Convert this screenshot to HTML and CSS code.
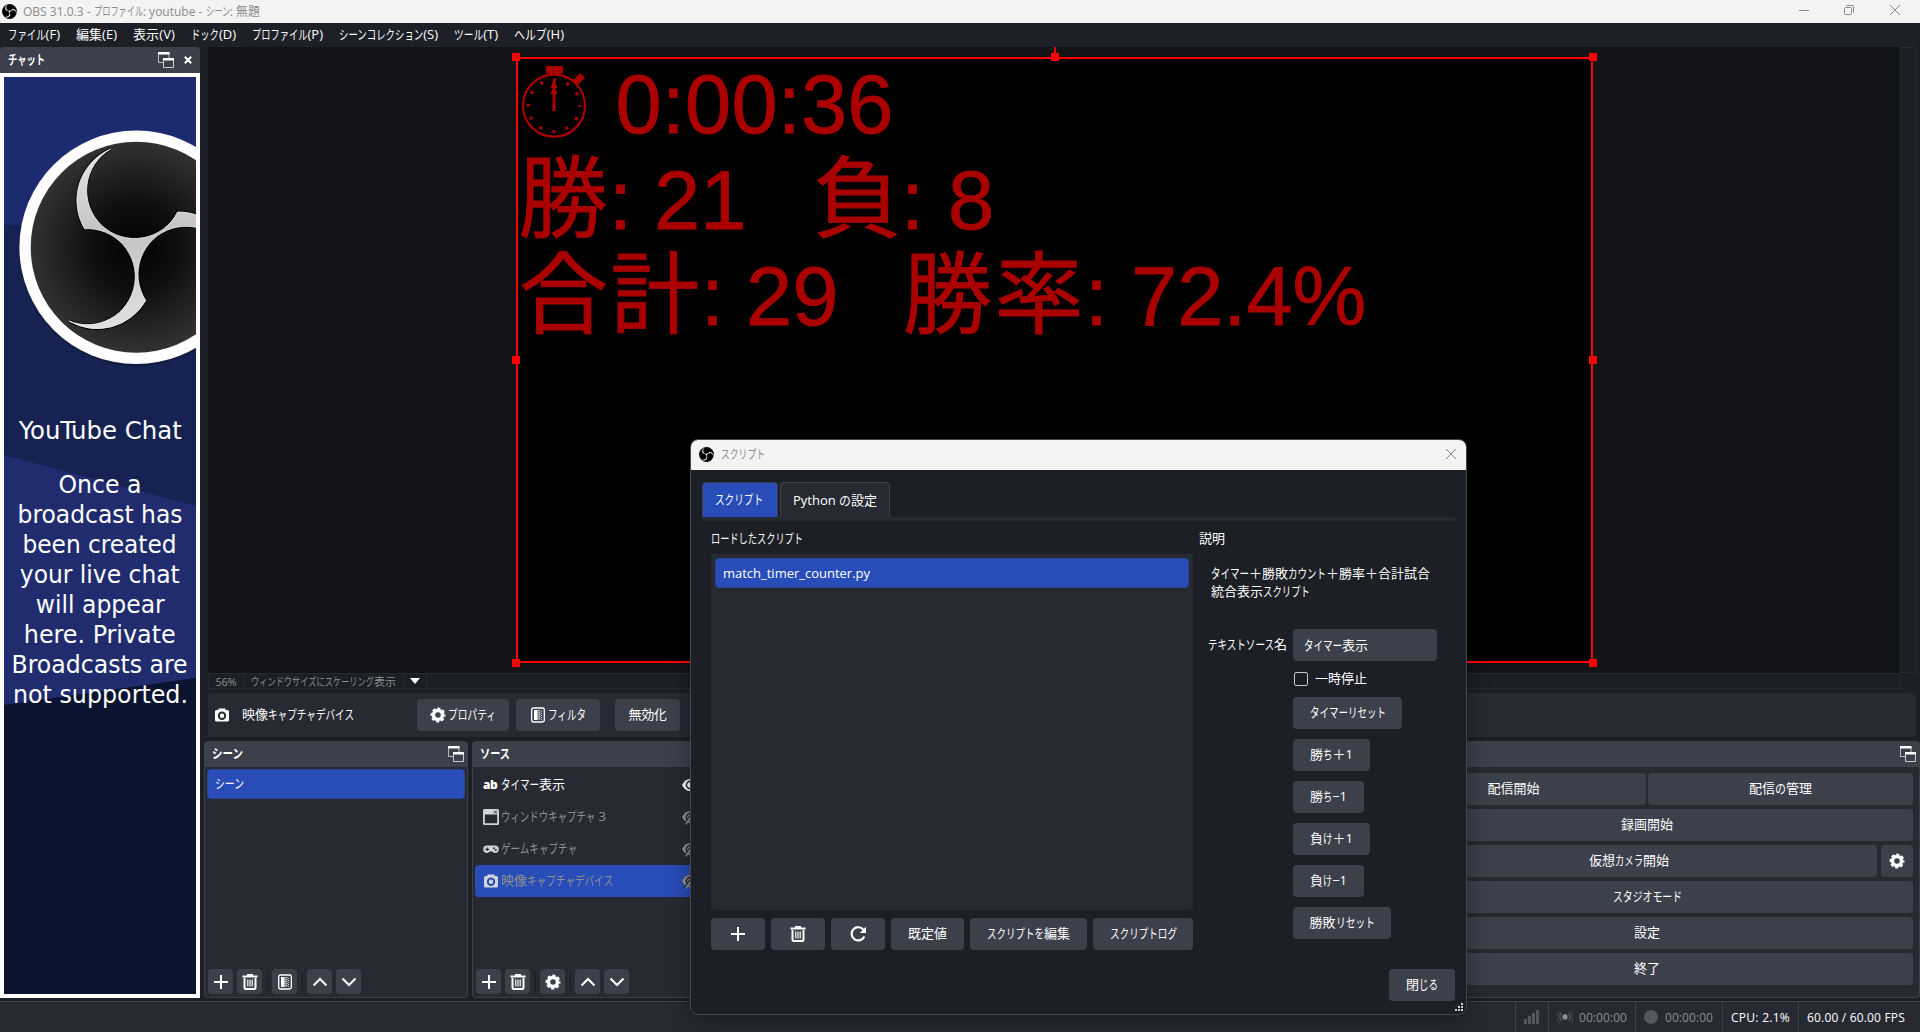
FILE: index.html
```html
<!DOCTYPE html>
<html lang="ja">
<head>
<meta charset="utf-8">
<title>OBS 31.0.3</title>
<link rel="stylesheet" href="styles.css">
</head>
<body>
<svg class="defs" width="0" height="0">
  <defs>
    <radialGradient id="lobe-top" gradientUnits="userSpaceOnUse" cx="136" cy="247" r="106"><stop offset="0" stop-color="#030104"/><stop offset=".4" stop-color="#0f0d10"/><stop offset="1" stop-color="#333134"/></radialGradient>
    <linearGradient id="blade" x1="0" y1="0" x2="0" y2="1"><stop offset="0" stop-color="#e9e9e9"/><stop offset=".45" stop-color="#c4c2c5"/><stop offset="1" stop-color="#e0e0e0"/></linearGradient>
    <path id="blades" d="M110.6 149A56 56 0 0 0 84.6 228.7A48 48 0 1 1 69 321A56 56 0 0 0 145.8 300.5A48 48 0 1 1 234 273.8A56 56 0 0 0 177.6 212A48 48 0 1 1 110.6 149Z"/>
    <symbol id="obs" viewBox="30 141 212 212"><circle cx="136" cy="247" r="105" fill="#000"/><use href="#blades" fill="#eee" stroke="#eee" stroke-width="4"/></symbol>
    <symbol id="popout" viewBox="0 0 16 16"><path d="M.5 1h10.500v9.500H.5z" fill="none" stroke="#b9bcc3"/><path d="M0 0h11.500v2.500H0z" fill="#fff"/><path d="M5.500 6.500h10v9h-10z" fill="#3c404b" stroke="#c9cbd0"/><path d="M5 6h11v2.500H5z" fill="#fff"/></symbol>
    <symbol id="plus" viewBox="0 0 16 16"><path d="M8 1v14M1 8h14" stroke="#fff" stroke-width="2" fill="none"/></symbol>
    <symbol id="trash" viewBox="0 0 16 16"><path d="M.5 1.500h4.500V0h6v1.500h4.500v2H.5z" fill="#fff"/><path d="M2.500 4v9.500q0 1.500 1.500 1.500h8q1.500 0 1.500-1.500V4" fill="none" stroke="#fff" stroke-width="2"/><path d="M5.800 5.500v7M8 5.500v7M10.200 5.500v7" stroke="#fff" stroke-width="1.200"/></symbol>
    <symbol id="filter" viewBox="0 0 16 16"><rect x="1.700" y="1" width="12.600" height="14" rx="1.800" fill="none" stroke="#fff" stroke-width="1.300"/><path d="M4 3h3.500v10H4z" fill="#fff"/><path d="M8 3v10M10 3v10" stroke="#fff" stroke-width="1" stroke-dasharray="1 1"/><path d="M9 4v9M11.500 4v9" stroke="#ccc" stroke-width="1" stroke-dasharray="1 1"/></symbol>
    <symbol id="up" viewBox="0 0 16 16"><path d="M1.500 11.500L8 5l6.500 6.500" stroke="#fff" stroke-width="2" fill="none"/></symbol>
    <symbol id="down" viewBox="0 0 16 16"><path d="M1.500 4.500L8 11l6.500-6.500" stroke="#fff" stroke-width="2" fill="none"/></symbol>
    <symbol id="gear" viewBox="0 0 16 16"><circle cx="8" cy="8" r="4.500" fill="none" stroke="#fff" stroke-width="3.400"/><circle cx="8" cy="8" r="6.200" fill="none" stroke="#fff" stroke-width="2.600" stroke-dasharray="2.870 2" stroke-dashoffset="1.400"/></symbol>
    <symbol id="camera" viewBox="0 0 16 16"><path fill-rule="evenodd" d="M2.500 3H4.500V1.500H11.500V3H13.500Q15 3 15 4.500V13Q15 14.500 13.500 14.500H2.500Q1 14.500 1 13V4.500Q1 3 2.500 3ZM8 4.500A4.200 4.200 0 1 0 8 12.900A4.200 4.200 0 1 0 8 4.500ZM8 6.500A2.200 2.200 0 1 1 8 10.900A2.200 2.200 0 1 1 8 6.500Z"/></symbol>
    <symbol id="window" viewBox="0 0 16 16"><path fill-rule="evenodd" d="M1.500 0h13q1.500 0 1.500 1.500v13q0 1.500-1.500 1.500h-13Q0 16 0 14.500v-13Q0 0 1.500 0zM1.800 5.500v8.700h12.400V5.500z" fill="#d3d4d8"/><path d="M11 1.500l3 3m0-3l-3 3" stroke="#272a33"/></symbol>
    <symbol id="pad" viewBox="0 0 16 10"><path d="M4 1.500h8a3.700 3.700 0 0 1 0 7.500q-1.500 0-2.500-1.500h-3Q5.500 9 4 9a3.700 3.700 0 0 1 0-7.500z" fill="#d3d4d8"/><path d="M4.200 3.500v3.600M2.400 5.300H6" stroke="#272a33" stroke-width="1.200"/><circle cx="11" cy="4.200" r="1" fill="#272a33"/><circle cx="12.800" cy="6" r="1" fill="#272a33"/></symbol>
    <symbol id="eye" viewBox="0 0 16 16"><path d="M0 8Q3 2 8 2T16 8Q13 14 8 14T0 8z" fill="#fff"/><circle cx="8" cy="8" r="3.600" fill="none" stroke="#272a33" stroke-width="1.600"/></symbol>
    <symbol id="eye-off" viewBox="0 0 16 16"><path d="M0 8Q3 2 8 2T16 8Q13 14 8 14T0 8z" fill="#8f8f90"/><circle cx="8" cy="8" r="3.600" fill="none" stroke="#272a33" stroke-width="1.600"/><path d="M2.500 15L12 1" stroke="#272a33" stroke-width="1.500"/><path d="M3.500 15.500L13.500 1.500" stroke="#8f8f90" stroke-width="1.500"/></symbol>
    <symbol id="reload" viewBox="0 0 16 16"><path d="M13.500 3.800A6.600 6.600 0 1 0 14.300 10.500" fill="none" stroke="#fff" stroke-width="2.200"/><path d="M16 .8V7H9.800z" fill="#fff"/></symbol>
  </defs>
</svg>

<div class="app">
  <header class="titlebar">
    <svg class="logo"><use href="#obs"/></svg>
    <span class="fit title" data-w="237">OBS 31.0.3 - プロファイル: youtube - シーン: 無題</span>
    <svg class="winctl" width="104" height="16" viewBox="0 0 104 16"><path d="M1 8.500h10" stroke="#8a8a8a"/><rect x="46.500" y="5.500" width="7" height="7" rx="1" fill="none" stroke="#8a8a8a"/><path d="M48.500 3.500h5.500q1.500 0 1.500 1.500v5.500" fill="none" stroke="#8a8a8a"/><path d="M92 3l10 10M102 3l-10 10" stroke="#8a8a8a"/></svg>
  </header>
  <nav class="menubar">
    <span class="fit" data-w="52">ファイル(F)</span><span class="fit" data-w="41">編集(E)</span><span class="fit" data-w="42">表示(V)</span><span class="fit" data-w="45">ドック(D)</span><span class="fit" data-w="71">プロファイル(P)</span><span class="fit" data-w="99">シーンコレクション(S)</span><span class="fit" data-w="44">ツール(T)</span><span class="fit" data-w="50">ヘルプ(H)</span>
  </nav>

  <div class="body">
    <aside class="chat">
      <div class="dock-title"><span class="fit" data-w="37">チャット</span><svg class="i16 push"><use href="#popout"/></svg><svg class="x" viewBox="0 0 8 8"><path d="M.8.8l6.400 6.400M7.200.8L.8 7.200" stroke="#fff" stroke-width="2"/></svg></div>
      <div class="chat-page">
        <svg class="chat-art" viewBox="4 77 192 917" width="192" height="917">
          <path d="M4 77h192v917H4z" fill="#162352"/><path d="M4 77h192v148H4z" fill="#1c2a70"/>
          <path d="M4 455l192 51v172L4 705z" fill="#212c6e"/><path d="M4 705l192-27v316H4z" fill="#0a1430"/>
          <circle cx="136.200" cy="249" r="117.500" fill="#000" opacity=".18"/>
          <circle cx="136.200" cy="247.300" r="116.800" fill="#fff"/><circle cx="136.200" cy="247.300" r="105.500" fill="url(#lobe-top)"/>
          <use href="#blades" fill="url(#blade)" stroke="#000" stroke-width="2.500"/><use href="#blades" fill="url(#blade)" stroke="#f4f4f4" stroke-width=".8"/>
        </svg>
        <div class="chat-text">
          <p class="heading"><span class="fit stretch" data-w="163">YouTube Chat</span></p>
          <p><span class="fit stretch" data-w="83">Once a</span><span class="fit stretch" data-w="165">broadcast has</span><span class="fit stretch" data-w="154">been created</span><span class="fit stretch" data-w="160">your live chat</span><span class="fit stretch" data-w="129">will appear</span><span class="fit stretch" data-w="152">here. Private</span><span class="fit stretch" data-w="176">Broadcasts are</span><span class="fit stretch" data-w="175">not supported.</span></p>
        </div>
      </div>
    </aside>

    <main class="main">
      <section class="preview">
        <svg class="canvas" viewBox="208 47 1692 626" width="1692" height="626">
          <path d="M517 58h1075v604H517z" fill="#000" stroke="#f00" stroke-width="2"/>
          <path d="M1055 47v11" stroke="#f00" stroke-width="2"/>
          <path d="M512 53h8v8h-8zM1051 53h8v8h-8zM1589 53h8v8h-8zM512 356h8v8h-8zM1589 356h8v8h-8zM512 659h8v8h-8zM1589 659h8v8h-8z" fill="#f00"/>
          <g fill="#a00">
            <circle cx="554" cy="105.700" r="31" fill="none" stroke="#a00" stroke-width="2.200"/>
            <path d="M546 66h17v7.500h-17zM550 73h9v2h-9zM552.500 85h3v26h-3zM554 78.500l3.500 9.500h-7zM554 85l3.500 9h-7z"/>
            <path d="M580 73l5 4.500-7.500 8-5-4.500z"/>
            <circle cx="554" cy="105.700" r="25.800" fill="none" stroke="#a00" stroke-width="3.200" stroke-dasharray="3 10.509" stroke-dashoffset="1.500"/>
          </g>
          <g class="counter">
            <text x="615.500" y="132.500" textLength="278">0:00:36</text>
            <text y="228.500"><tspan class="han" x="518.500" y="230">勝</tspan><tspan x="609" y="228.500">: </tspan><tspan x="654">21</tspan><tspan class="han" x="813" y="230">負</tspan><tspan x="901" y="228.500">: </tspan><tspan x="948">8</tspan></text>
            <text y="325"><tspan class="han" x="519" y="326">合計</tspan><tspan x="701" y="325">: </tspan><tspan x="746">29</tspan><tspan class="han" x="903" y="326">勝率</tspan><tspan x="1085" y="325">: </tspan><tspan x="1131">72.4%</tspan></text>
          </g>
        </svg>
        <div class="vscroll"></div>
      </section>
      <div class="scalebar"><span class="c1"><span class="fit" data-w="21">56%</span></span><span class="c2"><span class="fit" data-w="145">ウィンドウサイズにスケーリング表示</span></span><span class="c3"><svg viewBox="0 0 10 6" width="10" height="6"><path d="M0 0h10L5 6z" fill="#fff"/></svg></span></div>
      <section class="context">
        <svg class="i16 cam"><use href="#camera"/></svg><span class="fit name" data-w="112">映像キャプチャデバイス</span>
        <button class="props"><svg class="i16"><use href="#gear"/></svg><span class="fit" data-w="48">プロパティ</span></button>
        <button class="filters"><svg class="i16"><use href="#filter"/></svg><span class="fit" data-w="38">フィルタ</span></button>
        <button class="disable"><span class="fit" data-w="38">無効化</span></button>
      </section>
      <section class="docks">
        <div class="dock scenes">
          <div class="dock-title"><span class="fit" data-w="31">シーン</span><svg class="i16 push"><use href="#popout"/></svg></div>
          <div class="dock-list"><div class="item sel"><span class="fit" data-w="29">シーン</span></div></div>
          <div class="tools"><button><svg class="i16"><use href="#plus"/></svg></button><button><svg class="i16"><use href="#trash"/></svg></button><i></i><button><svg class="i16"><use href="#filter"/></svg></button><i></i><button><svg class="i16"><use href="#up"/></svg></button><button><svg class="i16"><use href="#down"/></svg></button></div>
        </div>
        <div class="dock sources">
          <div class="dock-title"><span class="fit" data-w="30">ソース</span></div>
          <div class="dock-list">
            <div class="src on"><b class="ab">ab</b><span class="fit" data-w="64">タイマー表示</span><svg class="i16 push"><use href="#eye"/></svg></div>
            <div class="src"><svg class="i16"><use href="#window"/></svg><span class="fit" data-w="105">ウィンドウキャプチャ 3</span><svg class="i16 push"><use href="#eye-off"/></svg></div>
            <div class="src"><svg class="pad"><use href="#pad"/></svg><span class="fit" data-w="76">ゲームキャプチャ</span><svg class="i16 push"><use href="#eye-off"/></svg></div>
            <div class="src sel"><svg class="i16 cam"><use href="#camera"/></svg><span class="fit" data-w="112">映像キャプチャデバイス</span><svg class="i16 push"><use href="#eye-off"/></svg></div>
          </div>
          <div class="tools"><button><svg class="i16"><use href="#plus"/></svg></button><button><svg class="i16"><use href="#trash"/></svg></button><i></i><button><svg class="i16"><use href="#gear"/></svg></button><i></i><button><svg class="i16"><use href="#up"/></svg></button><button><svg class="i16"><use href="#down"/></svg></button></div>
        </div>
        <div class="dock mixer"><div class="dock-title"></div></div>
        <div class="dock controls">
          <div class="dock-title"><svg class="i16 push"><use href="#popout"/></svg></div>
          <div class="ctl">
            <div class="row tight"><button><span class="fit" data-w="52">配信開始</span></button><button><span class="fit" data-w="63">配信の管理</span></button></div>
            <div class="row"><button><span class="fit" data-w="52">録画開始</span></button></div>
            <div class="row"><button><span class="fit" data-w="80">仮想カメラ開始</span></button><button class="sq"><svg class="i16"><use href="#gear"/></svg></button></div>
            <div class="row"><button><span class="fit" data-w="69">スタジオモード</span></button></div>
            <div class="row"><button><span class="fit" data-w="26">設定</span></button></div>
            <div class="row"><button><span class="fit" data-w="26">終了</span></button></div>
          </div>
        </div>
      </section>
    </main>
  </div>

  <footer class="status">
    <div class="s-net"><svg width="16" height="14" viewBox="0 0 16 14"><path d="M0 9h3v5H0zM4 6h3v8H4zM8 3h3v11H8zM12 0h3v14h-3z" fill="#54575f"/></svg></div>
    <div class="s-live dim"><svg width="16" height="14" viewBox="0 0 16 14"><circle cx="8" cy="7" r="2.700" fill="#8c8e92"/><path d="M4.500 3a5.500 5.500 0 0 0 0 8M11.500 3a5.500 5.500 0 0 1 0 8" stroke="#5c5e65" stroke-width="1.300" fill="none"/><path d="M2.400 1a8.500 8.500 0 0 0 0 12M13.600 1a8.500 8.500 0 0 1 0 12" stroke="#3e414a" stroke-width="1.300" fill="none"/></svg><span class="fit" data-w="48">00:00:00</span></div>
    <div class="s-rec dim"><svg width="14" height="14" viewBox="0 0 14 14"><circle cx="7" cy="7" r="7" fill="#54575f"/></svg><span class="fit" data-w="48">00:00:00</span></div>
    <div class="s-cpu"><span class="fit" data-w="59">CPU: 2.1%</span></div>
    <div class="s-fps"><span class="fit" data-w="98">60.00 / 60.00 FPS</span></div>
  </footer>
</div>

<div class="dialog">
  <div class="dlg-title"><svg class="logo"><use href="#obs"/></svg><span class="fit" data-w="44">スクリプト</span><svg class="dlg-x" viewBox="0 0 10 10"><path d="M0 0l10 10M10 0L0 10" stroke="#8a8a8a"/></svg></div>
  <div class="dlg-body">
    <div class="tabs"><div class="tab sel"><span class="fit" data-w="48">スクリプト</span></div><div class="tab"><span class="fit" data-w="84">Python の設定</span></div></div>
    <div class="pane">
      <div class="left">
        <div class="label"><span class="fit" data-w="92">ロードしたスクリプト</span></div>
        <div class="list"><div class="item sel"><span class="fit" data-w="147">match_timer_counter.py</span></div></div>
        <div class="actions"><button class="ic"><svg class="i16"><use href="#plus"/></svg></button><button class="ic"><svg class="i16"><use href="#trash"/></svg></button><button class="ic"><svg class="i16"><use href="#reload"/></svg></button><button class="w73"><span class="fit" data-w="39">既定値</span></button><button class="w117"><span class="fit" data-w="83">スクリプトを編集</span></button><button class="w100"><span class="fit" data-w="67">スクリプトログ</span></button></div>
      </div>
      <div class="right">
        <div class="label"><span class="fit" data-w="26">説明</span></div>
        <div class="desc"><span class="fit" data-w="219">タイマー＋勝敗カウント＋勝率＋合計試合</span><span class="fit" data-w="99">統合表示スクリプト</span></div>
        <div class="form">
          <div class="field"><span class="fit" data-w="79">テキストソース名</span><div class="input"><span class="fit" data-w="64">タイマー表示</span></div></div>
          <div class="check"><i></i><span class="fit" data-w="52">一時停止</span></div>
          <button class="b109"><span class="fit" data-w="76">タイマーリセット</span></button>
          <button class="b77"><span class="fit" data-w="43">勝ち＋1</span></button>
          <button class="b71"><span class="fit" data-w="37">勝ち−1</span></button>
          <button class="b77"><span class="fit" data-w="43">負け＋1</span></button>
          <button class="b71"><span class="fit" data-w="37">負け−1</span></button>
          <button class="b98"><span class="fit" data-w="65">勝敗リセット</span></button>
        </div>
      </div>
    </div>
    <div class="dlg-foot"><button><span class="fit" data-w="32">閉じる</span></button></div>
  </div>
  <svg class="grip" viewBox="0 0 8 8"><path d="M6 0h2v2H6zM3 3h2v2H3zM6 3h2v2H6zM0 6h2v2H0zM3 6h2v2H3zM6 6h2v2H6z" fill="#d0d0d0"/></svg>
</div>
<script src="fit.js"></script>
</body>
</html>
```

FILE: styles.css
```css
* { box-sizing: border-box; }
body { margin: 0; width: 1920px; height: 1032px; overflow: hidden; position: relative; background: #1d1f26; color: #fff; font: 13px/18px "Open Sans", "Noto Sans CJK JP", sans-serif; }
svg { display: block; flex: none; }
.defs { position: absolute; }
p { margin: 0; }
button { display: flex; align-items: center; justify-content: center; gap: 2px; height: 32px; padding: 0; border: 0; border-radius: 4px; background: #3c404b; color: #fff; font: inherit; flex: none; }
.fit { display: inline-block; white-space: pre; flex: none; }
.fit .kana { display: inline-block; transform-origin: 0 50%; white-space: pre; }
.menubar .fit, button .fit, .context .fit, .dock-title .fit, .scenes .fit, .src .fit, .check .fit, .field > .fit, .tab.sel .fit { margin-bottom: 2px; }
.i16 { width: 16px; height: 16px; }
.push { margin-left: auto; }
.logo { width: 15px; height: 15px; }
.cam { fill: #fff; }

.app { display: flex; flex-direction: column; height: 1032px; }
.titlebar { display: flex; align-items: center; height: 23px; padding: 0 18px 0 2px; background: #f3f3f3; color: #8c8c8c; font-size: 12px; gap: 6px; }
.winctl { margin: -4px 0 0 auto; }
.titlebar .logo { margin-top: -1px; }
.menubar { display: flex; align-items: center; gap: 16px; height: 24px; padding: 0 8px; background: #1d2027; }
.body { display: flex; height: 954px; }

.dock-title { display: flex; align-items: center; height: 26px; padding: 0 4px 0 8px; background: #3c404b; border-radius: 4px 4px 0 0; font-weight: 600; flex: none; }
.chat { width: 200px; display: flex; flex-direction: column; }
.chat .dock-title { padding-right: 8px; }
.x { width: 8px; height: 8px; margin-left: 10px; }
.chat-page { height: 925px; border: 4px solid #fff; display: grid; }
.chat-art, .chat-text { grid-area: 1 / 1; }
.chat-text { position: relative; padding-top: 339px; text-align: center; font: 24px/30px "DejaVu Sans Condensed", "DejaVu Sans", sans-serif; font-stretch: condensed; }
.chat-text p { display: flex; flex-direction: column; align-items: center; }
.chat-text .heading { margin-bottom: 24px; }

.main { width: 1716px; margin-left: 4px; display: flex; flex-direction: column; }
.preview { display: flex; height: 626px; margin: 0 4px; }
.canvas { background: #131418; }
.vscroll { width: 16px; border: 1px solid #272a33; background: #1d1f26; }
.counter { fill: #a00; stroke: #a00; stroke-width: .8px; font: 83px "Liberation Sans", Arial, sans-serif; }
.counter .han { font-family: "Noto Sans CJK JP", sans-serif; font-size: 89px; letter-spacing: 2.5px; stroke-width: .8px; }
.scalebar { display: flex; height: 16px; width: 1692px; margin-left: 4px; border: 1px solid #272a33; color: #8b8c8f; font-size: 11px; line-height: 14px; }
.scalebar > span { display: flex; align-items: center; justify-content: center; border-right: 1px solid #272a33; }
.scalebar .fit { margin-top: 2px; }
.c1 { width: 35px; }
.c2 { width: 160px; }
.c3 { width: 23px; }
.context { display: flex; align-items: center; height: 44px; margin: 4px 4px; padding-left: 6px; background: #272a33; border-radius: 4px; flex: none; }
.context .name { margin-left: 12px; }
.context .props { width: 92px; margin-left: 63px; }
.context .filters { width: 84px; margin-left: 7px; }
.context .disable { width: 65px; margin-left: 15px; }

.docks { display: flex; gap: 4px; height: 257px; }
.dock { display: flex; flex-direction: column; background: #272a33; border: 1px solid #3c404b; border-top: 0; border-radius: 4px; }
.scenes { width: 264px; }
.scenes .dock-title, .sources .dock-title { padding-left: 7px; padding-right: 3px; }
.sources { width: 232px; }
.mixer { flex: 1; }
.controls { width: 544px; }
.controls .dock-title { padding-right: 3px; }
.dock-list { flex: 1; padding: 2px 2px; }
.item { display: flex; align-items: center; height: 30px; padding: 0 7px; border-radius: 4px; border: 1px solid #2a458f; background: #284cb8; }
.src { display: flex; align-items: center; height: 32px; padding: 0 3px 0 8px; gap: 2px; color: #8f8f90; border-radius: 4px; }
.src.on { color: #fff; }
.src.sel { background: #284cb8; }
.src .cam { fill: #d3d4d8; }
.ab { width: 16px; font: 800 12px/18px "Open Sans", sans-serif; letter-spacing: -.5px; }
.pad { width: 16px; height: 10px; }
.tools { display: flex; gap: 4px; padding: 0 3px 3px; align-items: center; }
.tools button { width: 25px; height: 25px; }
.tools i { width: 1px; height: 20px; margin: 0 .5px; background: #1b1d23; }
.ctl { display: flex; flex-direction: column; gap: 4px; padding: 6px 6px 0 4px; }
.row { display: flex; gap: 4px; }
.row.tight { gap: 2px; }
.row button { flex: 1; }
.row .sq { flex: 0 0 32px; }

.status { display: flex; justify-content: flex-end; height: 31px; border-top: 1px solid #3c404b; background: #272a33; font-size: 12px; }
.status > div { display: flex; align-items: center; border-left: 1px solid #3c404b; padding-left: 8px; }
.status .fit { margin-top: 1px; }
.dim { color: #8b8c8f; }
.s-net { width: 33px; }
.s-live { width: 87px; gap: 6px; }
.s-rec { width: 87px; gap: 7px; }
.s-cpu { width: 76px; }
.s-fps { width: 122px; }

.dialog { position: absolute; left: 690px; top: 439px; width: 777px; height: 576px; border: 1px solid #45464a; border-radius: 8px; background: #1d1f26; box-shadow: 0 6px 22px rgba(0,0,0,.35); overflow: hidden; }
.dlg-title { display: flex; align-items: center; height: 30px; padding: 0 10px 0 8px; gap: 7px; background: #f3f3f3; color: #8c8c8c; font-size: 12px; }
.dlg-title .logo { margin-top: -2px; }
.dlg-x { width: 10px; height: 10px; margin: -2px 0 0 auto; }
.dlg-body { padding: 12px 11px 0; }
.tabs { display: flex; gap: 2px; height: 35px; }
.tab { display: flex; align-items: center; justify-content: center; width: 110px; background: #272a33; border: 1px solid #3c404b; border-bottom: 0; border-radius: 4px 4px 0 0; }
.tab.sel { width: 76px; background: #284cb8; padding-right: 2px; }
.pane { display: flex; border-top: 4px solid #272a33; height: 434px; padding: 8px 0 0 9px; }
.left { width: 482px; }
.label { height: 25px; }
.list { height: 356px; padding: 4px; background: #272a33; border-radius: 4px; }
.actions { display: flex; gap: 6px; margin-top: 8px; }
.ic { width: 54px; }
.w73 { width: 73px; }
.w117 { width: 117px; }
.w100 { width: 100px; }
.right { margin-left: 6px; }
.desc { display: flex; flex-direction: column; align-items: flex-start; margin: 10px 0 0 12px; }
.form { display: flex; flex-direction: column; align-items: flex-start; gap: 10px; margin: 29px 0 0 94px; }
.field { display: flex; align-items: center; justify-content: flex-end; gap: 6px; margin-left: -85px; width: 229px; }
.input { width: 144px; height: 32px; display: flex; align-items: center; padding-left: 11px; background: #3c404b; border-radius: 4px; }
.check { display: flex; align-items: center; gap: 7px; height: 16px; padding-left: 1px; }
.check i { width: 14px; height: 14px; border: 1px solid #c6c7c9; border-radius: 2px; }
.b109 { width: 109px; }
.b98 { width: 98px; }
.b77 { width: 77px; }
.b71 { width: 71px; }
.dlg-foot { display: flex; justify-content: flex-end; margin-top: 18px; }
.dlg-foot button { width: 66px; }
.grip { position: absolute; right: 3px; bottom: 3px; width: 8px; height: 8px; }
```

FILE: fit.js
```js
// Labels use narrow UI kana: kana runs are condensed so that each label has its data-w width.
const KANA = /([\u3041-\u3096\u30a1-\u30fc]+)/;
document.querySelectorAll('.fit').forEach(el => {
  const target = parseFloat(el.dataset.w);
  if (el.classList.contains('stretch')) {
    el.style.transform = `scaleX(${target / el.getBoundingClientRect().width})`;
    return;
  }
  const parts = el.textContent.split(KANA).filter(s => s !== '');
  const runs = [];
  el.textContent = '';
  parts.forEach(s => {
    const span = document.createElement('span');
    span.textContent = s;
    if (KANA.test(s)) { span.className = 'kana'; runs.push(span); }
    el.appendChild(span);
  });
  const total = el.getBoundingClientRect().width;
  if (!runs.length) {
    el.style.letterSpacing = (target - total) / el.textContent.length + 'px';
    return;
  }
  const widths = runs.map(r => r.getBoundingClientRect().width);
  const kana = widths.reduce((a, b) => a + b, 0);
  const k = (target - (total - kana)) / kana;
  runs.forEach((r, i) => {
    r.style.width = widths[i] * k + 'px';
    r.style.transform = `scaleX(${k})`;
  });
});
```
